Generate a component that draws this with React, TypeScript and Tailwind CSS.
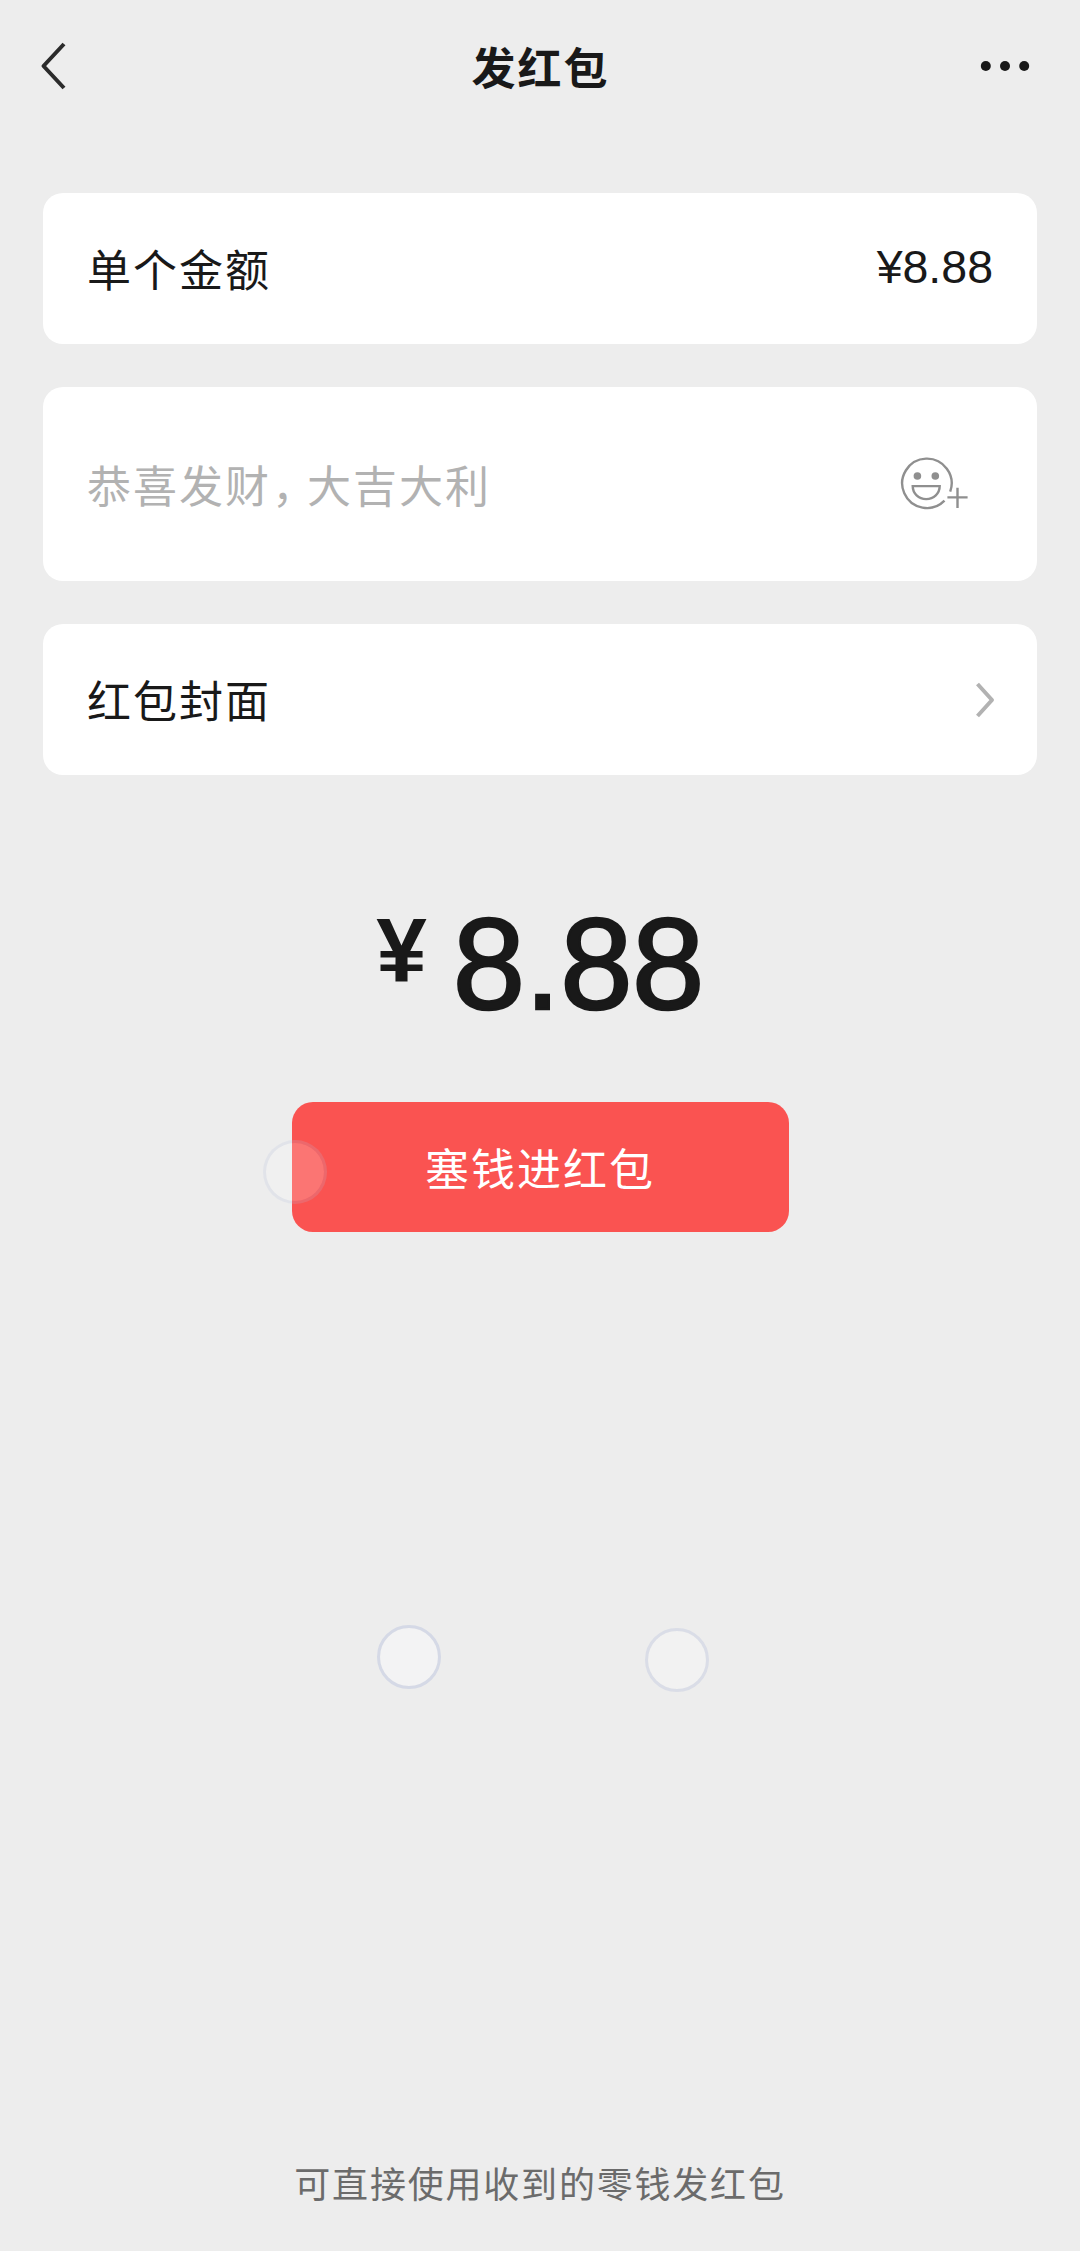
import type { ReactNode } from 'react'

const BackIcon = () => (
    <svg width="26" height="48" viewBox="0 0 26 48" fill="none" stroke="#2b2b2b" strokeWidth="4">
        <path d="M24 2 L3.5 24 L24 46" strokeLinejoin="round" />
    </svg>
)

const MoreIcon = () => (
    <svg width="50" height="12" viewBox="0 0 50 12" fill="#191919">
        <circle cx="5.8" cy="6" r="5" />
        <circle cx="25" cy="6" r="5" />
        <circle cx="44.2" cy="6" r="5" />
    </svg>
)

const EmojiAddIcon = () => (
    <svg width="70" height="54" viewBox="0 0 70 54" fill="none" stroke="#8f8f8f" strokeWidth="2.4">
        <path d="M50.2 34.6 A24.7 24.7 0 1 0 44.5 43.7" />
        <path d="M12.7 29.1 H39.7 C39.7 36.5 33.8 42.1 26.2 42.1 C18.6 42.1 12.7 36.5 12.7 29.1 Z" />
        <path d="M47.4 40.4 H67.6 M57.5 30.8 V51" />
        <circle cx="17.4" cy="19" r="3.8" fill="#8f8f8f" stroke="none" />
        <circle cx="35.3" cy="19" r="3.8" fill="#8f8f8f" stroke="none" />
    </svg>
)

const ArrowIcon = () => (
    <svg width="20" height="36" viewBox="0 0 20 36" fill="none" stroke="#b2b2b2" strokeWidth="4">
        <path d="M1.5 2 L16 18 L1.5 34" strokeLinejoin="round" />
    </svg>
)

const Row = ({ children, className }: { children: ReactNode; className: string }) => (
    <div className={`flex items-center justify-between rounded-[20px] bg-white pl-[44px] ${className}`}>
        {children}
    </div>
)

// Marks where a finger is on the screen
const TouchPoint = ({ className }: { className: string }) => (
    <div className={`pointer-events-none absolute size-[64px] rounded-full border-[3px] bg-clip-padding ${className}`} />
)

const App = () => {
    return (
        <div className="relative flex h-[2251px] w-[1080px] flex-col overflow-hidden bg-[#ededed] font-['Noto_Sans_CJK_SC',sans-serif] text-[#191919]">
            <header className="grid h-[132px] grid-cols-3 items-center pr-[50px] pl-[40px]">
                <button type="button" aria-label="返回" className="justify-self-start">
                    <BackIcon />
                </button>
                <h1 className="justify-self-center pl-[11px] text-[44px] leading-none font-bold tracking-[2px] whitespace-nowrap">
                    发红包
                </h1>
                <button type="button" aria-label="更多" className="justify-self-end">
                    <MoreIcon />
                </button>
            </header>

            <main className="flex flex-col gap-[43px] px-[43px] pt-[61px]">
                <Row className="h-[151px] pr-[44px]">
                    <span className="pb-px text-[44px] leading-none tracking-[2px]">单个金额</span>
                    <span className="pb-[2px] font-['Liberation_Sans',sans-serif] text-[46.5px] leading-none">¥8.88</span>
                </Row>
                <Row className="h-[194px] pr-[67px]">
                    <span className="text-[44px] leading-none tracking-[2px] text-[#b2b2b2]">
                        恭喜发财<span className="ml-px tracking-[-9px]">，</span>大吉大利
                    </span>
                    <EmojiAddIcon />
                </Row>
                <Row className="h-[151px] pr-[41px]">
                    <span className="pb-px text-[44px] leading-none tracking-[2px]">红包封面</span>
                    <ArrowIcon />
                </Row>
            </main>

            <div className="mt-[124px] flex h-[130px] items-start justify-center gap-[26px] font-['Liberation_Sans',sans-serif] leading-none">
                <span className="pt-[6px] text-[91px] font-bold">¥</span>
                <span className="text-[130px] tracking-[-0.5px] [-webkit-text-stroke:2.5px_#191919]">8.88</span>
            </div>

            <button
                type="button"
                className="mt-[73px] h-[130px] w-[497px] self-center rounded-[21px] bg-[#fa5351] text-[44px] leading-none tracking-[2px] text-white"
            >
                塞钱进红包
            </button>

            <footer className="mt-auto pb-[51px] text-center text-[36px] leading-none tracking-[1.8px] text-[#6b6b6b]">
                可直接使用收到的零钱发红包
            </footer>

            <TouchPoint className="top-[1140px] left-[263px] border-[#b4bedc]/20 bg-white/20" />
            <TouchPoint className="top-[1625px] left-[377px] border-[#d5d9e6] bg-[#f3f3f4]" />
            <TouchPoint className="top-[1628px] left-[645px] border-[#dadde7] bg-[#f2f2f2]" />
        </div>
    )
}

export default App
